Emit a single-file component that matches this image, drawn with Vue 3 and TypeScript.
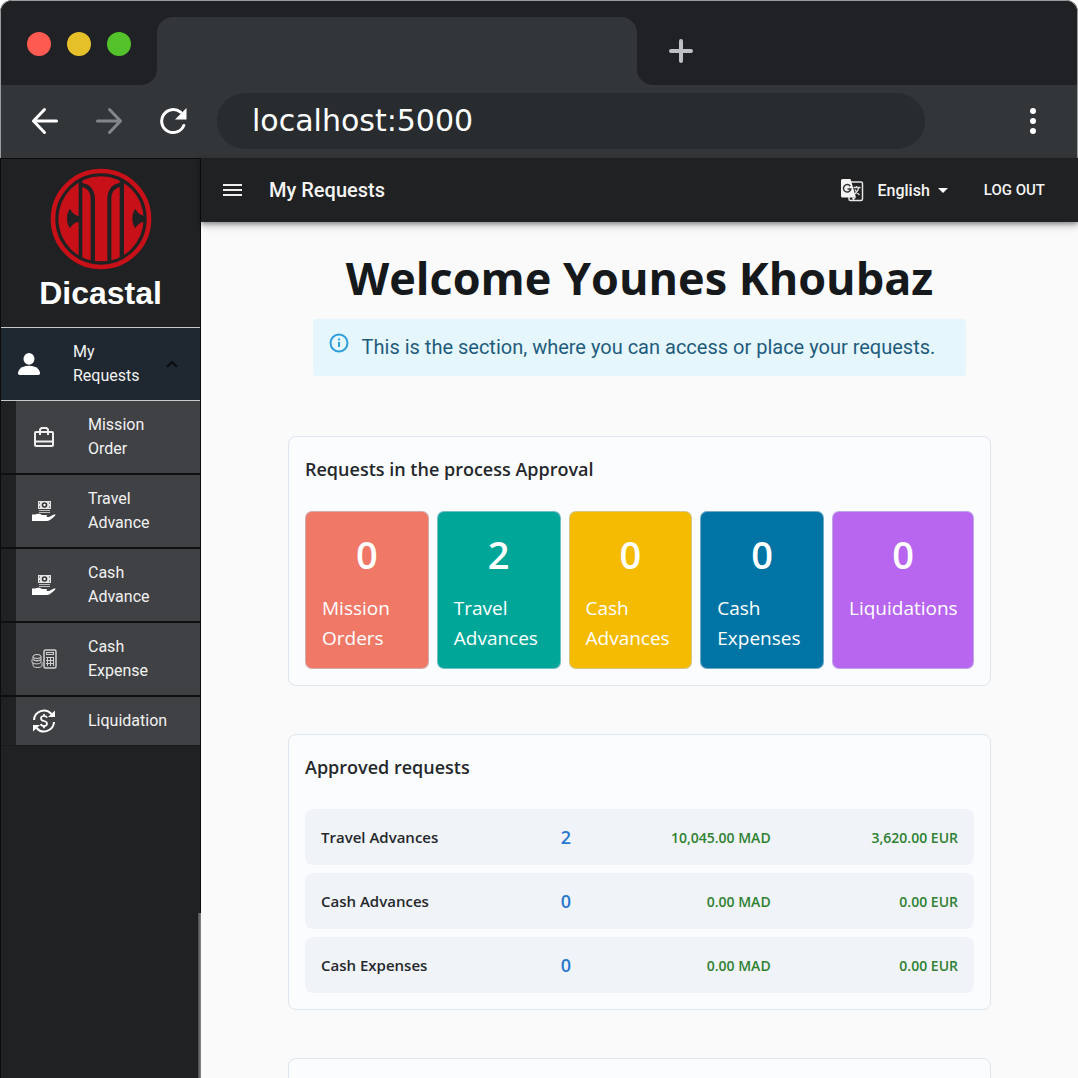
<script setup lang="ts">
import { ref } from 'vue'

type IconName = 'briefcase' | 'hand' | 'calculator' | 'refund'

interface NavItem {
  label: string
  icon: IconName
}

interface Tile {
  count: number
  label: string
  tone: string
}

interface ApprovedRow {
  label: string
  count: number
  mad: string
  eur: string
}

const address = ref('localhost:5000')

const navItems: NavItem[] = [
  { label: 'Mission Order', icon: 'briefcase' },
  { label: 'Travel Advance', icon: 'hand' },
  { label: 'Cash Advance', icon: 'hand' },
  { label: 'Cash Expense', icon: 'calculator' },
  { label: 'Liquidation', icon: 'refund' },
]

const tiles: Tile[] = [
  { count: 0, label: 'Mission Orders', tone: 'coral' },
  { count: 2, label: 'Travel Advances', tone: 'teal' },
  { count: 0, label: 'Cash Advances', tone: 'amber' },
  { count: 0, label: 'Cash Expenses', tone: 'blue' },
  { count: 0, label: 'Liquidations', tone: 'violet' },
]

const approved: ApprovedRow[] = [
  { label: 'Travel Advances', count: 2, mad: '10,045.00 MAD', eur: '3,620.00 EUR' },
  { label: 'Cash Advances', count: 0, mad: '0.00 MAD', eur: '0.00 EUR' },
  { label: 'Cash Expenses', count: 0, mad: '0.00 MAD', eur: '0.00 EUR' },
]
</script>

<template>
  <div class="window">
    <div class="tabstrip">
      <div class="lights">
        <span class="light red"></span>
        <span class="light yellow"></span>
        <span class="light green"></span>
      </div>
      <div class="tab"></div>
      <div class="strip-rest">
        <button class="plain" type="button" aria-label="New tab">
          <svg width="24" height="24" viewBox="0 0 24 24" stroke="#bdc1c6" stroke-width="4" stroke-linecap="round">
            <path d="M12 2v20M2 12h20" />
          </svg>
        </button>
      </div>
    </div>

    <div class="toolbar">
      <button class="plain" type="button" aria-label="Back">
        <svg width="28" height="28" viewBox="0 0 28 28" fill="none" stroke="#fff" stroke-width="3" stroke-linecap="round" stroke-linejoin="round">
          <path d="M25.500 14H2.500M13.500 2.500L2.500 14l11 11.500" />
        </svg>
      </button>
      <button class="plain" type="button" aria-label="Forward">
        <svg width="28" height="28" viewBox="0 0 28 28" fill="none" stroke="#848789" stroke-width="3" stroke-linecap="round" stroke-linejoin="round">
          <path d="M2.500 14h23M14.500 2.500l11 11.500-11 11.500" />
        </svg>
      </button>
      <button class="plain" type="button" aria-label="Reload">
        <svg width="28" height="28" viewBox="0 0 28 28">
          <path d="M21.500 5.200A11.500 11.500 0 1 0 24.800 18.500" fill="none" stroke="#fff" stroke-width="3" stroke-linecap="round" />
          <path d="M27.500 1v11.500H16z" fill="#fff" />
        </svg>
      </button>
      <input v-model="address" class="address" type="text" aria-label="Address" spellcheck="false" />
      <button class="plain menu" type="button" aria-label="Browser menu">
        <svg width="8" height="28" viewBox="0 0 8 28" fill="#fff">
          <circle cx="4" cy="4" r="3" />
          <circle cx="4" cy="14" r="3" />
          <circle cx="4" cy="24" r="3" />
        </svg>
      </button>
    </div>

    <div class="app">
      <aside class="sidebar">
        <div class="brand">
          <svg width="102" height="102" viewBox="149 41 306 306" aria-hidden="true">
            <defs>
              <clipPath id="disc"><circle cx="302" cy="194" r="128" /></clipPath>
            </defs>
            <circle cx="302" cy="194" r="144" fill="none" stroke="#c71017" stroke-width="14" />
            <g fill="#c71017" clip-path="url(#disc)">
              <path d="M170 60H235V185C224 183 216 176 209 163C197 178 197 207 209 222C216 210 224 204 235 202V330H170z" />
              <path d="M371 60H434V185C420 183 412 176 405 163C393 178 393 207 405 222C412 210 420 204 434 202V330H371z" />
              <path d="M246 98C262 103 271 114 271 134V330H246z" />
              <path d="M358 98C342 103 333 114 333 134V330H358z" />
              <path d="M246 60H358V86C334 90 321 108 321 134V321H284V134C284 108 270 90 246 86z" />
            </g>
          </svg>
          <span class="brand-name">Dicastal</span>
        </div>

        <nav class="nav">
          <a class="nav-head" href="#requests">
            <svg width="22" height="22" viewBox="2 2 12 12" fill="#fff">
              <path d="M3 14s-1 0-1-1 1-4 6-4 6 3 6 4-1 1-1 1H3z" />
              <ellipse cx="8" cy="5.200" rx="3" ry="3.200" />
            </svg>
            <span class="nav-text">My Requests</span>
            <svg class="chevron" width="12" height="8" viewBox="0 0 12 8" fill="none" stroke="#0b0d10" stroke-width="2">
              <path d="M1 7l5-5 5 5" />
            </svg>
          </a>
          <a v-for="item in navItems" :key="item.label" class="nav-item" href="#requests">
            <svg v-if="item.icon === 'briefcase'" class="nav-icon" viewBox="0 0 26 26" fill="none" stroke="#eee" stroke-width="2" stroke-linejoin="round">
              <rect x="4" y="8" width="18" height="14" rx="1" />
              <path d="M9 11V5.500L10.500 4h5L17 5.500V11M4 17.500h18" />
            </svg>
            <svg v-else-if="item.icon === 'hand'" class="nav-icon" viewBox="0 0 26 26">
              <rect x="7" y="3" width="13" height="8" fill="#e4e4e4" />
              <path d="M8 12.500h11M8 14.500h11" stroke="#bbb" />
              <circle cx="13.500" cy="7" r="2.800" fill="#333" />
              <circle cx="13.500" cy="7" r="1.200" fill="#fff" />
              <path d="M8.500 4.500v1M18.500 4.500v1M8.500 8.500v1M18.500 8.500v1" stroke="#333" />
              <path d="M1 16.500h3c2-1 5-1 7 .5h4c1.500 0 1.500 1.500 0 2h3l5-2.500c1.500-.4 2 .3 1 1.200-3 2.800-5 4.800-8 5.300H1z" fill="#fff" />
            </svg>
            <svg v-else-if="item.icon === 'calculator'" class="nav-icon" viewBox="0 0 26 26" fill="none" stroke="#d0d0d0">
              <rect x="13" y="4" width="12" height="18" rx="1.500" stroke-width="1.500" />
              <rect x="15.500" y="6.500" width="7" height="2" />
              <path d="M15 11.500h8M15 14.500h8M15 17.500h8M16.500 11v9M19.500 11v9M22.500 11v9" />
              <ellipse cx="6" cy="10.500" rx="4" ry="2" />
              <path d="M2 10.500v2.500c0 2.500 8 2.500 8 0v-2.500M1 13.500v2.500c0 2.500 9 2.500 9 0v-2.500M2 16.500v3c0 2.700 9 2.700 9 0v-3M2 13c0 2 8 2 8 0" />
            </svg>
            <svg v-else class="nav-icon" viewBox="0 0 26 26" fill="none" stroke="#fff" stroke-width="2">
              <path d="M3 12A10 10 0 0 1 20.500 6M23 14A10 10 0 0 1 5.500 20" />
              <path d="M24 2.500V9h-7zM2 23.500V17h7z" fill="#fff" stroke="none" />
              <path d="M16 9.800C15.500 8.300 14.500 8 13 8c-4 0-4 4.300 0 5s4 5 0 5c-1.600 0-2.800-.5-3.200-2M13 6v2M13 18v2.200" stroke-width="1.700" />
            </svg>
            <span class="nav-text">{{ item.label }}</span>
          </a>
        </nav>
      </aside>

      <div class="main">
        <header class="appbar">
          <button class="plain" type="button" aria-label="Toggle navigation">
            <svg width="20" height="14" viewBox="0 0 20 14" stroke="#eee" stroke-width="2">
              <path d="M0 2h19M0 7h19M0 12h19" />
            </svg>
          </button>
          <span class="page-title">My Requests</span>
          <button class="plain language" type="button">
            <svg class="translate" width="24" height="24" viewBox="0 0 24 24">
              <rect x="9" y="4" width="13.500" height="18.500" rx="1.500" fill="none" stroke="#e4e4e4" stroke-width="1.500" />
              <path d="M2.500 1h8l5.500 18.500H2.500A1.500 1.500 0 0 1 1 18V2.500A1.500 1.500 0 0 1 2.500 1z" fill="#f4f4f4" />
              <path d="M10.200 8.200A3.700 3.700 0 1 0 10.800 11H7.500" fill="none" stroke="#333" stroke-width="1.500" />
              <path d="M13.500 9.500h7M16.500 8v1.500M19 9.500c-.8 3-2.500 5-4 6.500M15 11.500c1 2.500 2.500 4 4.500 5.500" fill="none" stroke="#ddd" stroke-width="1.300" />
              <path d="M12 19.500h4L13 22.500z" fill="#f4f4f4" />
            </svg>
            <span>English</span>
            <svg width="10" height="5" viewBox="0 0 10 5" fill="#fff"><path d="M0 0h10L5 5z" /></svg>
          </button>
          <button class="plain logout" type="button">LOG OUT</button>
        </header>

        <main class="content">
          <h1>Welcome Younes Khoubaz</h1>
          <p class="notice" role="note">
            <svg width="20" height="20" viewBox="0 0 20 20" fill="none" stroke="#2f9fdc" stroke-width="2">
              <circle cx="10" cy="10" r="8.500" />
              <path d="M10 9v5M10 5.500v2" />
            </svg>
            <span>This is the section, where you can access or place your requests.</span>
          </p>

          <section class="card">
            <h2>Requests in the process Approval</h2>
            <div class="tiles">
              <article v-for="tile in tiles" :key="tile.label" class="tile" :class="tile.tone">
                <strong>{{ tile.count }}</strong>
                <span>{{ tile.label }}</span>
              </article>
            </div>
          </section>

          <section class="card">
            <h2>Approved requests</h2>
            <table>
              <colgroup>
                <col class="col-label" />
                <col class="col-count" />
                <col class="col-mad" />
                <col />
              </colgroup>
              <tbody>
                <tr v-for="row in approved" :key="row.label">
                  <th scope="row">{{ row.label }}</th>
                  <td class="count">{{ row.count }}</td>
                  <td class="amount">{{ row.mad }}</td>
                  <td class="amount">{{ row.eur }}</td>
                </tr>
              </tbody>
            </table>
          </section>

          <section class="card upcoming"></section>
        </main>
      </div>
    </div>
  </div>
</template>

<style>
body {
  margin: 0;
  background: #fff;
}
</style>

<style scoped>
* {
  box-sizing: border-box;
}

.window {
  display: flex;
  flex-direction: column;
  height: 100vh;
  overflow: hidden;
  border-radius: 12px 12px 0 0;
  background: #323639;
  font-family: Roboto, "Liberation Sans", sans-serif;
}

.plain {
  display: flex;
  align-items: center;
  padding: 0;
  border: 0;
  background: none;
  color: inherit;
  font: inherit;
  cursor: pointer;
}

.tabstrip {
  display: flex;
  flex: none;
  height: 85px;
  border-top: 1px solid #9a9d9d;
  border-left: 1px solid #9a9d9d;
  border-right: 1px solid #9a9d9d;
  border-radius: 12px 12px 0 0;
  background: linear-gradient(#202124 50%, #323639 50%);
}

.lights {
  display: flex;
  flex: none;
  gap: 16px;
  width: 156px;
  padding: 31px 0 0 26px;
  border-radius: 11px 0 16px 0;
  background: #202124;
}

.light {
  width: 24px;
  height: 24px;
  border-radius: 50%;
}

.red {
  background: #ff5a52;
}

.yellow {
  background: #e6c029;
}

.green {
  background: #53c22b;
}

.tab {
  flex: 0 1 480px;
  margin-top: 16px;
  border-radius: 16px 16px 0 0;
  background: #323639;
}

.strip-rest {
  display: flex;
  flex: 1;
  align-items: center;
  padding: 16px 0 0 32px;
  border-radius: 0 11px 0 16px;
  background: #202124;
}

.toolbar {
  display: flex;
  flex: none;
  align-items: center;
  gap: 36px;
  height: 73px;
  padding: 0 40px 2px 30px;
  border-left: 1px solid #9a9d9d;
  border-right: 1px solid #9a9d9d;
}

.address {
  flex: 1;
  min-width: 0;
  height: 56px;
  margin-left: -6px;
  padding: 0 35px;
  border: 0;
  border-radius: 28px;
  outline: 0;
  background: #292c2f;
  color: #fff;
  font-family: "DejaVu Sans", sans-serif;
  font-size: 30px;
}

.menu {
  margin-left: 68px;
}

.app {
  display: flex;
  flex: 1;
  min-height: 0;
  background: #fafafa;
}

.sidebar {
  position: relative;
  flex: none;
  width: 201px;
  border: 1px solid #0c0c0d;
  border-bottom: 0;
  background: #202122;
  color: #f2f2f2;
  font-size: 16px;
  line-height: 24px;
}

.sidebar::after {
  position: absolute;
  top: 82%;
  right: -1px;
  bottom: 0;
  width: 3px;
  background: linear-gradient(90deg, #46484a, #8a8a8a);
  content: "";
}

.brand {
  display: flex;
  flex-direction: column;
  align-items: center;
  height: 168px;
  padding-top: 9px;
}

.brand-name {
  color: #fff;
  font-family: "Liberation Sans", Arial, sans-serif;
  font-size: 32px;
  font-weight: 700;
  line-height: 46px;
}

.nav a {
  color: inherit;
  text-decoration: none;
}

.nav-head {
  display: flex;
  align-items: center;
  padding: 12px 22px 12px 17px;
  border-top: 1px solid #c8c8c8;
  border-bottom: 1px solid #c8c8c8;
  background: #1f2730;
}

.nav-head .nav-text {
  margin: 0 24px 0 33px;
}

.chevron {
  flex: none;
}

.nav-item {
  display: flex;
  align-items: center;
  padding: 12px 24px 12px 30px;
  border-bottom: 2px solid #0f0f10;
  background: linear-gradient(90deg, #202122 15px, #404144 15px);
}

.nav-item:last-child {
  border-bottom: 1px solid #1a1b1c;
}

.nav-icon {
  flex: none;
  width: 26px;
  height: 26px;
  margin: -1px 31px -1px 0;
}

.nav-text {
  flex: 1;
}

.main {
  display: flex;
  flex: 1;
  flex-direction: column;
  min-width: 0;
}

.appbar {
  display: flex;
  z-index: 1;
  flex: none;
  align-items: center;
  height: 64px;
  padding: 0 33px 0 22px;
  background: #202122;
  box-shadow: 0 2px 4px rgba(0, 0, 0, 0.3), 0 4px 8px rgba(0, 0, 0, 0.2);
  color: #f4f4f4;
}

.page-title {
  margin-left: 26px;
  font-size: 20px;
  font-weight: 500;
}

.language {
  gap: 8px;
  margin-left: auto;
  font-size: 16px;
  font-weight: 500;
}

.translate {
  margin-right: 6px;
}

.logout {
  margin-left: 36px;
  font-size: 15px;
  font-weight: 500;
}

.content {
  display: flex;
  flex: 1;
  flex-direction: column;
  align-items: center;
  min-height: 0;
  padding: 0 87px;
  overflow: hidden;
  color: #25282b;
  font-family: "Open Sans", "Noto Sans", sans-serif;
}

h1 {
  flex: none;
  margin: 24px 0 9px;
  color: #16191c;
  font-size: 45px;
  font-weight: 700;
  line-height: 64px;
}

.notice {
  display: flex;
  flex: none;
  gap: 13px;
  width: 93%;
  margin: 0 0 60px;
  padding: 14px 16px 15px;
  border-radius: 4px;
  background: #e5f6fd;
  color: #1f5c7c;
  font-family: Roboto, sans-serif;
  font-size: 20px;
  line-height: 28px;
}

.card {
  flex: none;
  width: 100%;
  margin-bottom: 48px;
  padding: 16px;
  border: 1px solid #dde5ee;
  border-radius: 8px;
  background: #fbfcfe;
}

.upcoming {
  min-height: 250px;
}

h2 {
  margin: 0 0 26px;
  font-size: 18px;
  font-weight: 600;
  line-height: 32px;
}

.tiles {
  display: grid;
  grid-template-columns: repeat(4, minmax(0, 1fr)) 142px;
  gap: 8px;
}

.tile {
  display: flex;
  flex-direction: column;
  padding: 15px 16px;
  border: 1px solid rgba(190, 205, 225, 0.6);
  border-radius: 7px;
  color: #fff;
  font-size: 19px;
  line-height: 30px;
}

.tile strong {
  margin-bottom: 11px;
  font-size: 38px;
  font-weight: 600;
  line-height: 55px;
  text-align: center;
}

.coral {
  background-color: #f07867;
}

.teal {
  background-color: #00a799;
}

.amber {
  background-color: #f4bb00;
}

.blue {
  background-color: #0075a5;
}

.violet {
  background-color: #b866f0;
}

table {
  width: 100%;
  margin: -8px 0;
  border-spacing: 0 8px;
  table-layout: fixed;
}

.col-label {
  width: 36%;
}

.col-count {
  width: 6%;
}

.col-mad {
  width: 30%;
}

th,
td {
  height: 56px;
  padding: 0 16px;
  background: #f0f3f8;
  white-space: nowrap;
}

th {
  border-radius: 8px 0 0 8px;
  font-size: 15px;
  font-weight: 600;
  text-align: left;
}

.count {
  padding: 0;
  color: #2579d0;
  font-size: 18px;
  font-weight: 600;
  text-align: center;
}

.amount {
  color: #2f8132;
  font-size: 14px;
  font-weight: 600;
  text-align: right;
}

td:last-child {
  border-radius: 0 8px 8px 0;
}
</style>
